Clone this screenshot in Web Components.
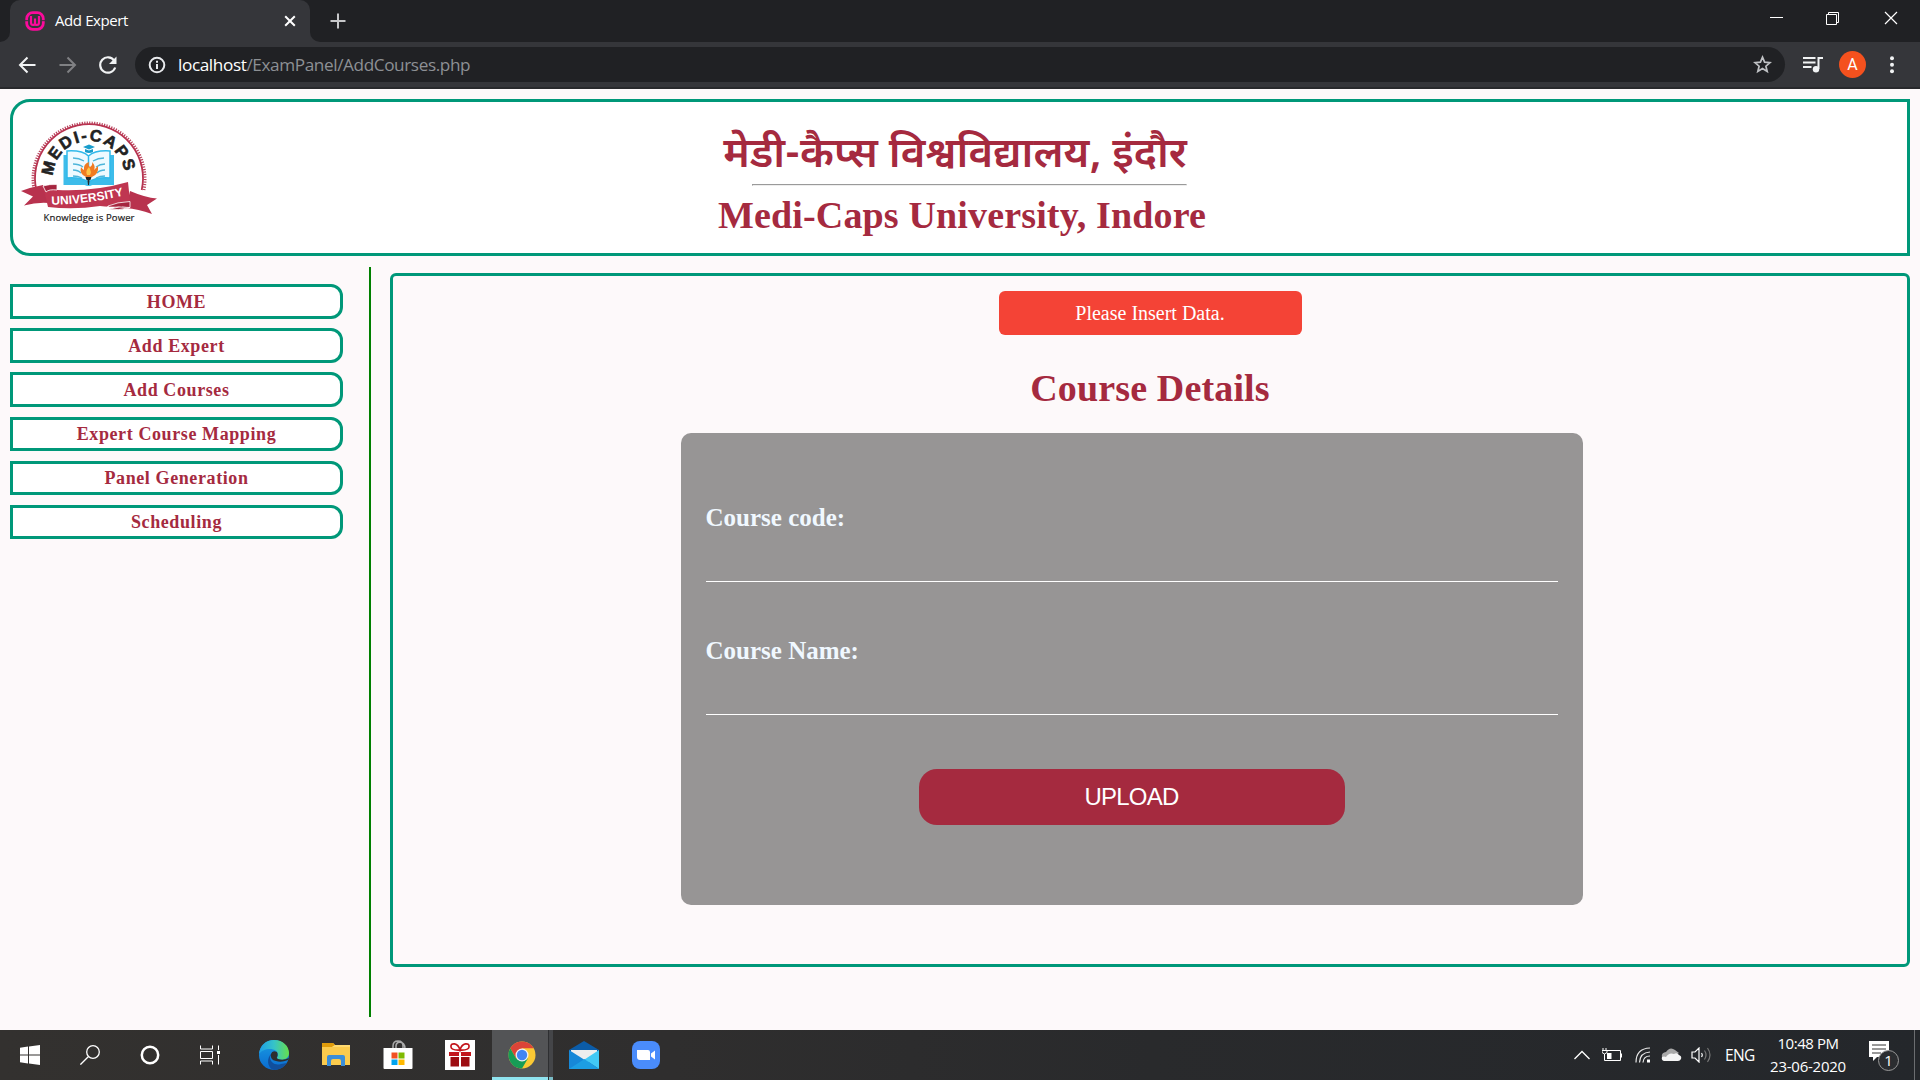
<!DOCTYPE html>
<html lang="en">
<head>
<meta charset="utf-8">
<title>Add Expert</title>
<style>
  html, body { margin: 0; padding: 0; }
  body {
    width: 1920px;
    height: 1080px;
    overflow: hidden;
    display: flex;
    flex-direction: column;
    background: #fdf9fa;
    font-family: "Liberation Serif", "Times New Roman", serif;
  }
  main {
    height: 941px;
    box-sizing: border-box;
    padding: 10px 10px 0;
  }
  .row { display: flex; margin-top: 11px; }
</style>
</head>
<body>
  <browser-bar tab="Add Expert" host="localhost" path="/ExamPanel/AddCourses.php"></browser-bar>
  <main>
    <uni-header>
      <span slot="hindi">मेडी-कैप्स विश्वविद्यालय, इंदौर</span>
      <span slot="english">Medi-Caps University, Indore</span>
    </uni-header>
    <div class="row">
      <side-menu>
        <menu-link>HOME</menu-link>
        <menu-link>Add Expert</menu-link>
        <menu-link>Add Courses</menu-link>
        <menu-link>Expert Course Mapping</menu-link>
        <menu-link>Panel Generation</menu-link>
        <menu-link>Scheduling</menu-link>
      </side-menu>
      <course-panel message="Please Insert Data." heading="Course Details">
        <course-field label="Course code:"></course-field>
        <course-field label="Course Name:"></course-field>
      </course-panel>
    </div>
  </main>
  <task-bar time="10:48 PM" date="23-06-2020" lang-code="ENG"></task-bar>

<script>
class BrowserBar extends HTMLElement {
  constructor() {
    super();
    this.attachShadow({ mode: "open" });
  }

  connectedCallback() {
    const styles = `
      :host { display: block; height: 89px; box-sizing: border-box; border-bottom: 2px solid #28292c;
        background: #35363a; color: #fff; font-family: "Open Sans", "Noto Sans", sans-serif; }
      svg { display: block; flex: none; }
      .strip { height: 42px; background: #202124; display: flex; align-items: flex-start; }
      .edge { width: 10px; height: 42px; background: #35363a; }
      .edge i { display: block; width: 10px; height: 42px; background: #202124; }
      .edge.l i { border-radius: 0 0 10px 0; }
      .edge.r i { border-radius: 0 0 0 10px; }
      .tab { width: 300px; height: 42px; box-sizing: border-box; background: #35363a;
        border-radius: 10px 10px 0 0; display: flex; align-items: center; padding: 0 14px 0 15px; }
      .tab span { flex: 1; margin: -2px 0 0 10px; font-size: 15px; letter-spacing: -0.4px; }
      .plus { margin: 13px 0 0 10px; }
      .win { margin-left: auto; margin-right: 22px; display: flex; gap: 43px; padding-top: 11px; }
      .win svg:last-child { margin-left: 1px; }
      .tools { height: 45px; display: flex; align-items: center; }
      .url { flex: 1; height: 35px; margin-right: 18px; border-radius: 18px; background: #202124;
        display: flex; align-items: center; padding: 0 13px; font-size: 17.2px; }
      .url span { margin: -1px 0 0 12px; flex: 1; color: #8d9094; letter-spacing: -0.4px; }
      .url b { font-weight: 400; color: #fff; }
      .avatar { width: 27px; height: 27px; border-radius: 50%; background: #f4511e; margin-right: 23px;
        display: flex; align-items: center; justify-content: center; font: 16px Roboto, sans-serif; }
      .tools > svg.note { margin-right: 15px; }
      .tools > svg.dots { margin-right: 25px; }
    `;
    this.shadowRoot.innerHTML = `
      <style>${styles}</style>
      <div class="strip">
        <div class="edge l"><i></i></div>
        <div class="tab">
          <svg width="20" height="20" viewBox="0 0 20 20" fill="none" stroke="#fb0a9c">
            <rect x="1.7" y="1.7" width="16.6" height="16.6" rx="6" stroke-width="2.8"/>
            <path d="M0 9.7h3.500M16.500 9.700h3.500" stroke="#35363a" stroke-width="1"/>
            <path d="M6 5v6.500q0 2.500 2 2.500t2-2V7.500M10 12q0 2 2 2t2-2.500V5" stroke-width="2.200"/>
          </svg>
          <span>${this.getAttribute("tab")}</span>
          <svg width="12" height="12" viewBox="0 0 12 12" stroke="#fff" stroke-width="2"><path d="M1.200 1.200l9.600 9.600M10.800 1.200l-9.600 9.600"/></svg>
        </div>
        <div class="edge r"><i></i></div>
        <svg class="plus" width="16" height="16" viewBox="0 0 16 16" stroke="#c6c7c9" stroke-width="2"><path d="M8 .5v15M.5 8h15"/></svg>
        <div class="win">
          <svg width="13" height="14" viewBox="0 0 13 14" stroke="#fff"><path d="M0 6.500h13"/></svg>
          <svg width="14" height="14" viewBox="0 0 14 14" fill="none" stroke="#fff"><path d="M.5 3.500h10v10H.5zM2.500 3.500v-2h10v10h-2"/></svg>
          <svg width="14" height="14" viewBox="0 0 14 14" stroke="#fff" stroke-width="1.200"><path d="M1 1l12 12M13 1L1 13"/></svg>
        </div>
      </div>
      <div class="tools">
        <svg style="margin-left:18px;margin-right:23px" width="18" height="18" viewBox="0 0 18 18" fill="none" stroke="#f1f3f4" stroke-width="2"><path d="M17.500 9H2M9.500 1.500L2 9l7.500 7.500"/></svg>
        <svg style="margin-right:22px" width="18" height="18" viewBox="0 0 18 18" fill="none" stroke="#808184" stroke-width="2"><path d="M.5 9H16M8.500 1.500L16 9l-7.500 7.500"/></svg>
        <svg style="margin-right:18px" width="18" height="18" viewBox="0 0 18 18" fill="none" stroke="#f1f3f4" stroke-width="2.200"><path d="M15.200 4.500A7.700 7.700 0 1 0 16.200 11.500"/><path d="M17.500 .5v7.500H10z" fill="#f1f3f4" stroke="none"/></svg>
        <div class="url">
          <svg width="18" height="18" viewBox="0 0 18 18" fill="none" stroke="#e8eaed" stroke-width="2"><circle cx="9" cy="9" r="7.300"/><path d="M9 8v5M9 4.700v2"/></svg>
          <span><b>${this.getAttribute("host")}</b>${this.getAttribute("path")}</span>
          <svg width="19" height="19" viewBox="0 0 19 19" fill="none" stroke="#bfc1c4" stroke-width="1.700"><path d="M9.500 2.200l2.100 5 5.400.5-4.100 3.500 1.300 5.300-4.700-2.900-4.700 2.900 1.300-5.300L2 7.700l5.400-.5z"/></svg>
        </div>
        <svg class="note" width="21" height="18" viewBox="0 0 21 18" stroke="#f1f3f4" stroke-width="2" fill="none"><path d="M0 2h12.500M0 6.500h12.500M0 11h8.500M15.500 13V2h4.500"/><circle cx="13" cy="13.300" r="3.200" fill="#f1f3f4" stroke="none"/></svg>
        <div class="avatar">A</div>
        <svg class="dots" width="6" height="18" viewBox="0 0 6 18" fill="#f1f3f4"><circle cx="3" cy="2.300" r="2"/><circle cx="3" cy="8.800" r="2"/><circle cx="3" cy="15.300" r="2"/></svg>
      </div>
    `;
  }
}
customElements.define("browser-bar", BrowserBar);

class UniLogo extends HTMLElement {
  constructor() {
    super();
    this.attachShadow({ mode: "open" });
  }

  connectedCallback() {
    this.shadowRoot.innerHTML = `
      <style>
        :host { display: block; width: 140px; height: 110px; }
        svg { display: block; font-family: "Liberation Sans", Arial, sans-serif; }
      </style>
      <svg width="140" height="110" viewBox="20 118 140 110">
        <defs>
          <path id="arc" d="M53 182V177A36 36 0 0 1 125 177V190"/>
          <path id="ribbon" d="M51.500 204.800Q88 204 128 194.500"/>
        </defs>
        <path d="M34.300 191A56 56 0 1 1 143.700 191" fill="none" stroke="#b8405a" stroke-width="3" stroke-dasharray="1.200 1.300"/>
        <path d="M36.300 190A54 54 0 1 1 141.700 190" fill="none" stroke="#b83350" stroke-width="1.800"/>
        <text font-size="16.500" font-weight="700" fill="#222" stroke="#222" stroke-width=".6" letter-spacing="1.700"><textPath href="#arc" startOffset="6">MEDI-CAPS</textPath></text>
        <!-- open book with the torch on it -->
        <path d="M63.500 155v30h21q4 2 8 0h21.500v-30" fill="#3dbcea"/>
        <path d="M67 151q15-1 21.500 5v26q-8-5-21.500-4zM110 151q-15-1-21.500 5v26q8-5 21.500-4z" fill="#eefaff" stroke="#31b9ea" stroke-width="1.500"/>
        <path d="M73 158q6 0 11 3M73 164q6 0 10 3M73 170q5 0 8 3M73 176q5 0 9 2M104 158q-6 0-11 3M105 164q-5 0-9 3M105 170q-5 0-8 3M105 176q-5 0-9 2" fill="none" stroke="#4db5da" stroke-width="1.300"/>
        <path d="M83 147l6-2.500 6 2.500-6 2.500zM85 149v3q4 2 8 0v-3l-4 1.500z" fill="#199dcc"/>
        <path d="M86 177q-7-3-5-10 2 3 3 3-1-6 5-8-1 4 1 5 3-2 2-5 4 4 2 8l4-4q1 8-6 11z" fill="#f07b21"/>
        <path d="M87 175q-2-4 2-8 3 5 1 8z" fill="#ffc548"/>
        <path d="M85.500 177h6l-1 3h-1l-.5 5h-1l-.5-5h-1z" fill="#252525"/>
        <path d="M21 191q11-4 22-6l6 18q-12-1-25 2.500l9-9zM157 198.500q-12-1-27-7.500l-4 17q12 1 26 6l-5-9z" fill="#b8324e"/>
        <path d="M43 186q6-2 14-1.500v5.500q36 2 71-8l2 19q-11 8-30 5-26 4-52 1z" fill="#bf3651"/>
        <path d="M43 186q6-2 14-1.500v5.500q-8-1-11 2zM108 206q9-4 22-4.500v6q-11-2-22 2zM108 206v3q10 2 22-1.500" fill="#a5253f" stroke="#fff" stroke-width=".8"/>
        <text font-size="12" font-weight="700" fill="#fff" letter-spacing=".1"><textPath href="#ribbon">UNIVERSITY</textPath></text>
        <text x="43.500" y="220.500" font-size="9.500" font-family="Open Sans, sans-serif" font-weight="500" fill="#222" stroke="#222" stroke-width=".2" textLength="91">Knowledge is Power</text>
      </svg>
    `;
  }
}
customElements.define("uni-logo", UniLogo);

class UniHeader extends HTMLElement {
  constructor() {
    super();
    this.attachShadow({ mode: "open" });
  }

  connectedCallback() {
    const styles = `
      :host { display: grid; grid-template-columns: 140px 1fr 145px; height: 157px; box-sizing: border-box;
        border: 3px solid #009879; border-radius: 20px 0 0 20px; background: #fff; padding-left: 7px; }
      uni-logo { margin-top: 16px; }
      .names { display: flex; flex-direction: column; align-items: center; color: #a52a3f; font-weight: 700; }
      .hi { height: 61px; margin-top: 21px; font-size: 42.1px; font-weight: 600; line-height: 67px; white-space: nowrap;
        transform: translateX(-6px); font-family: "Noto Sans Devanagari", "Liberation Serif", sans-serif; }
      hr { width: 435px; margin: 0; box-sizing: border-box; border: 1px solid; border-color: #9a9a9a #eee #eee #9a9a9a;
        transform: translateX(8px); }
      .en { font-size: 38px; line-height: 44px; margin-top: 7px; letter-spacing: 0.15px; white-space: nowrap; transform: translateX(1px); }
    `;
    this.shadowRoot.innerHTML = `
      <style>${styles}</style>
      <uni-logo></uni-logo>
      <div class="names">
        <div class="hi"><slot name="hindi"></slot></div>
        <hr>
        <div class="en"><slot name="english"></slot></div>
      </div>
    `;
  }
}
customElements.define("uni-header", UniHeader);

class SideMenu extends HTMLElement {
  constructor() {
    super();
    this.attachShadow({ mode: "open" });
    this.shadowRoot.innerHTML = `
      <style>
        :host { display: flex; flex-direction: column; gap: 9.7px; width: 361px; height: 750px; box-sizing: border-box;
          padding: 17px 26px 0 0; border-right: 2px solid #008000; flex: none; }
      </style>
      <slot></slot>
    `;
  }
}
customElements.define("side-menu", SideMenu);

class MenuLink extends HTMLElement {
  constructor() {
    super();
    this.attachShadow({ mode: "open" });
    this.shadowRoot.innerHTML = `
      <style>
        :host { display: block; height: 34.5px; box-sizing: border-box; border: 3px solid #009879;
          border-radius: 0 12px 12px 0; background: #fff; color: #a52a3f; text-align: center;
          font-size: 18px; font-weight: 700; line-height: 30px; letter-spacing: 0.6px; }
        :host(:nth-child(n+4)) { line-height: 29px; }
      </style>
      <slot></slot>
    `;
  }
}
customElements.define("menu-link", MenuLink);

class CourseField extends HTMLElement {
  constructor() {
    super();
    this.attachShadow({ mode: "open" });
  }

  connectedCallback() {
    this.shadowRoot.innerHTML = `
      <style>
        :host { display: block; height: 133px; }
        label { display: block; padding-top: 4px; font-size: 25px; line-height: 30px; font-weight: 700; color: #f0f8ff; text-indent: -0.5px; }
        input { display: block; width: 100%; height: 49px; box-sizing: border-box; padding: 0; border: 0;
          border-bottom: 1px solid #fff; background: transparent; outline: none; }
      </style>
      <label>${this.getAttribute("label")}</label>
      <input type="text">
    `;
  }
}
customElements.define("course-field", CourseField);

class CoursePanel extends HTMLElement {
  constructor() {
    super();
    this.attachShadow({ mode: "open" });
  }

  connectedCallback() {
    const styles = `
      :host { display: flex; flex-direction: column; align-items: center; width: 1520px; height: 694px; box-sizing: border-box;
        margin: 6px 0 0 19px; padding: 15px 0 0; border: 3px solid #009879; border-radius: 6px; flex: none; }
      .alert { width: 303px; height: 44px; border-radius: 6px; background: #f44336; color: #fff; font-size: 20px;
        line-height: 45px; text-align: center; }
      h1 { margin: 27px 0 0; font-size: 38px; line-height: 52px; color: #a52a3f; letter-spacing: 0.15px; }
      form { width: 902px; height: 472px; box-sizing: border-box; margin: 19px 36px 0 0; padding: 66px 25px 0;
        border-radius: 10px; background: #979595; }
      button { display: block; width: 426px; height: 56px; margin: 4px auto 0; border: 0; border-radius: 18px;
        background: #a52a3f; color: #fff; font: 24px/56px "Liberation Sans", Arial, sans-serif; letter-spacing: -0.8px; padding: 0 1px 0 0; }
    `;
    this.shadowRoot.innerHTML = `
      <style>${styles}</style>
      <div class="alert">${this.getAttribute("message")}</div>
      <h1>${this.getAttribute("heading")}</h1>
      <form>
        <slot></slot>
        <button type="button">UPLOAD</button>
      </form>
    `;
  }
}
customElements.define("course-panel", CoursePanel);

class TaskBar extends HTMLElement {
  constructor() {
    super();
    this.attachShadow({ mode: "open" });
  }

  connectedCallback() {
    const styles = `
      :host { display: flex; align-items: center; height: 50px; color: #fff;
        background: linear-gradient(90deg, #33312f 0, #2f2e2e 35%, #292a2c 60%, #24272b 100%);
        font-family: "Open Sans", "Noto Sans", sans-serif; }
      svg { display: block; flex: none; }
      .app { width: 62px; height: 50px; display: flex; align-items: center; justify-content: center; flex: none; }
      .sys { width: 60px; }
      .on { width: 56px; box-sizing: border-box; margin-left: 1px; padding-left: 4px; background: #535456; box-shadow: inset 0 -3px #8fe3ef; }
      .more { width: 5px; height: 50px; background: #444548; box-shadow: inset 1px 0 #2e2f31, inset 0 -3px #7abcc6; }
      .tray { margin-left: auto; display: flex; align-items: center; }
      .lang { font-size: 15.5px; margin-left: 13px; letter-spacing: -0.6px; width: 29px; }
      .clock { width: 80px; margin-left: 14px; text-align: center; font-size: 15px; line-height: 23px; letter-spacing: -0.45px;
        white-space: nowrap; margin-top: -1px; }
      .clock span { letter-spacing: -0.25px; }
      .desk { width: 1px; height: 50px; margin: 0 5px 0 14px; background: #6b6d70; }
    `;
    this.shadowRoot.innerHTML = `
      <style>${styles}</style>
      <div class="app sys"><svg width="20" height="20" viewBox="0 0 20 20" fill="#fff"><path d="M0 2.700l8-1.200v8H0zM9 1.400L20 0v9.500H9zM0 10.500h8v8l-8-1.200zM9 10.500h11V20L9 18.600z"/></svg></div>
      <div class="app sys"><svg width="20" height="20" viewBox="0 0 20 20" fill="none" stroke="#fff" stroke-width="1.300"><circle cx="13" cy="7" r="6.300"/><path d="M8.500 11.500L.4 19.600"/></svg></div>
      <div class="app sys"><svg width="20" height="20" viewBox="0 0 20 20" fill="none" stroke="#fff" stroke-width="2.500"><circle cx="10" cy="10" r="8.200"/></svg></div>
      <div class="app sys"><svg width="20" height="20" viewBox="0 0 20 20" fill="none" stroke="#fff"><path d="M.5 .5v3.500h12V.5M.5 6.500h12v7H.5zM.5 19.500V16h12v3.500M18.500 .5v4.500M18.500 10v9.500"/><path d="M17 6h3v3h-3z" fill="#fff" stroke="none"/></svg></div>
      <div class="app" style="margin-left:3px">
        <svg width="30" height="30" viewBox="0 0 30 30">
          <defs>
            <linearGradient id="e1"><stop offset="0" stop-color="#1c9de6"/><stop offset=".5" stop-color="#36c3c8"/><stop offset="1" stop-color="#66df4c"/></linearGradient>
            <linearGradient id="e2" x2="0" y2="1"><stop stop-color="#1b9de2"/><stop offset="1" stop-color="#0a6bd0"/></linearGradient>
          </defs>
          <circle cx="15" cy="15" r="15" fill="url(#e2)"/>
          <path d="M11 17c0 5 5 9 11 7l6-1q-5 7-13 7C8 28 7 18 13 13z" fill="#114f9c"/>
          <path d="M0 14C1 5 7 0 15 0c9 0 15 6 15 13 0 6-6 8-11 6-2-1 0-2 0-4 0-4-4-6-8-6-5 0-9 2-11 5z" fill="url(#e1)"/>
          <path d="M18 12q-5-2-6 2-1 6 5 7 5 2 12-1l1-2q-6 3-11 1-2-1-.5-3 .5-2-.5-4z" fill="#2e2e2e"/>
        </svg>
      </div>
      <div class="app">
        <svg width="28" height="24" viewBox="0 0 28 24"><path d="M0 0h11l3 3h14v19H0z" fill="#fbcb4d"/><path d="M0 0h11l2 2-3 2H0z" fill="#e09c0b"/><path d="M0 4h10l3-2h15v2H0z" fill="#ffda70"/><path d="M5 23V14q0-2 2-2h14q2 0 2 2v9h-4v-5q0-2-2-2h-6q-2 0-2 2v5z" fill="#3b8ed8"/></svg>
      </div>
      <div class="app">
        <svg width="30" height="30" viewBox="0 0 30 30"><path d="M10 9V6q0-5 5-5t5 5v3M13 9V6q0-3 3-4 6 0 6 7" fill="none" stroke="#aaa" stroke-width="1.500"/><path d="M.5 8h29v20q0 1-1 1h-27q-1 0-1-1z" fill="#fff"/><path d="M8.500 12.500h6v6h-6z" fill="#f25022"/><path d="M15.500 12.500h6v6h-6z" fill="#7fba00"/><path d="M8.500 19.500h6v5.500h-6z" fill="#00a4ef"/><path d="M15.500 19.500h6v5.500h-6z" fill="#ffb900"/></svg>
      </div>
      <div class="app">
        <svg width="30" height="30" viewBox="0 0 30 30"><path d="M0 0h30v30H0z" fill="#fff"/><path d="M4 12h10v4H4zM16 12h10v4H16z" fill="#c3161c"/><path d="M5.500 17H14v9.500H5.500zM16 17h8.500v9.500H16z" fill="#9d0c11"/><path d="M15 10Q6.500 10.500 6 7T9.500 3.800Q13.500 4.500 15 10 16.500 4.500 20.500 3.800 24.500 3.500 24 7T15 10z" fill="none" stroke="#c3161c" stroke-width="1.700"/></svg>
      </div>
      <div class="app on">
        <svg width="28" height="28" viewBox="-14 -14 28 28">
          <circle r="13.500" fill="#fbc934"/>
          <path d="M-11.700-6.800A13.500 13.500 0 0 1 11.700-6.800H0L-5.900 3.400z" fill="#dc4438"/>
          <path d="M-11.700-6.800A13.500 13.500 0 0 0 0 13.500L5.900 3.400H-5.900z" fill="#179c56"/>
          <circle r="6.500" fill="#f1f1f1"/><circle r="5.200" fill="#4285f4"/>
        </svg>
      </div>
      <div class="more"></div>
      <div class="app">
        <svg width="30" height="28" viewBox="0 0 30 28"><path d="M0 9L15 0l15 9v4H0z" fill="#0b5ca8"/><path d="M2 9h26v12H2z" fill="#eee"/><path d="M0 9l30 19H0z" fill="#1788d8"/><path d="M30 9v19L15.500 18.500z" fill="#42c9f5"/><path d="M0 28l15.500-10L30 28z" fill="#1d9ee3"/></svg>
      </div>
      <div class="app">
        <svg width="28" height="28" viewBox="0 0 28 28"><rect width="28" height="28" rx="8" fill="#4a8cfb"/><path d="M5 9h11q2 0 2 2v8H8q-3 0-3-3zM19 12.500l4-3v9l-4-3z" fill="#fff"/></svg>
      </div>
      <div class="tray">
        <svg width="16" height="10" viewBox="0 0 16 10" fill="none" stroke="#fff" stroke-width="1.300"><path d="M.5 9L8 1.500 15.500 9"/></svg>
        <svg style="margin-left:12px" width="20" height="14" viewBox="0 0 20 14" fill="none" stroke="#fff"><path d="M5 2.500h13.500v10H2.500V8M19.500 5.500v4M1 0v2M4 0v2M0 2.500h5v2q-2.500 3-5 0zM2.500 6v3"/><path d="M5 5h4.500v6H5z" fill="#fff" stroke="none"/></svg>
        <svg style="margin-left:13px" width="16" height="16" viewBox="0 0 16 16" fill="none" stroke="#e9e9e9" stroke-width="1.200"><path d="M1 15.500Q1 1.500 15 1M4.500 15.500Q5 5.500 15 5M8 15.500Q8.500 9 15 9"/><path d="M12 12.500h3v3h-3z" fill="#fff" stroke="none"/></svg>
        <svg style="margin-left:10px" width="22" height="14" viewBox="0 0 22 14"><path d="M1 9q-1-4 4-5 4-6 9-2l4 3-12 7z" fill="#a8a8a8"/><path d="M3 13q-3-1-2-4 2-1 4 0 3-5 8-3 3-2 5 1 3 1 2 4-1 2-3 2z" fill="#f4f4f4"/></svg>
        <svg style="margin-left:8px" width="21" height="16" viewBox="0 0 21 16" fill="none" stroke="#fff" stroke-width="1.200"><path d="M1 5h3l4-4v14l-4-4H1zM10.500 6q1.500 2 0 4"/><path d="M13.500 3.500q3 4.500 0 9M16.500 1q5 7 0 14" stroke="#777"/></svg>
        <div class="lang">${this.getAttribute("lang-code")}</div>
        <div class="clock">${this.getAttribute("time")}<br><span>${this.getAttribute("date")}</span></div>
        <svg style="margin-left:20px" width="32" height="32" viewBox="0 0 32 32"><path d="M1 2h20v16H9l-4 4v-4H1z" fill="#fff"/><path d="M4 6h14M4 10h14M4 14h9" stroke="#333"/><circle cx="20.500" cy="21.500" r="10" fill="#2b2d30" stroke="#999"/><text x="20.500" y="27" font-size="15" fill="#fff" text-anchor="middle">1</text></svg>
        <div class="desk"></div>
      </div>
    `;
  }
}
customElements.define("task-bar", TaskBar);
</script>
</body>
</html>
